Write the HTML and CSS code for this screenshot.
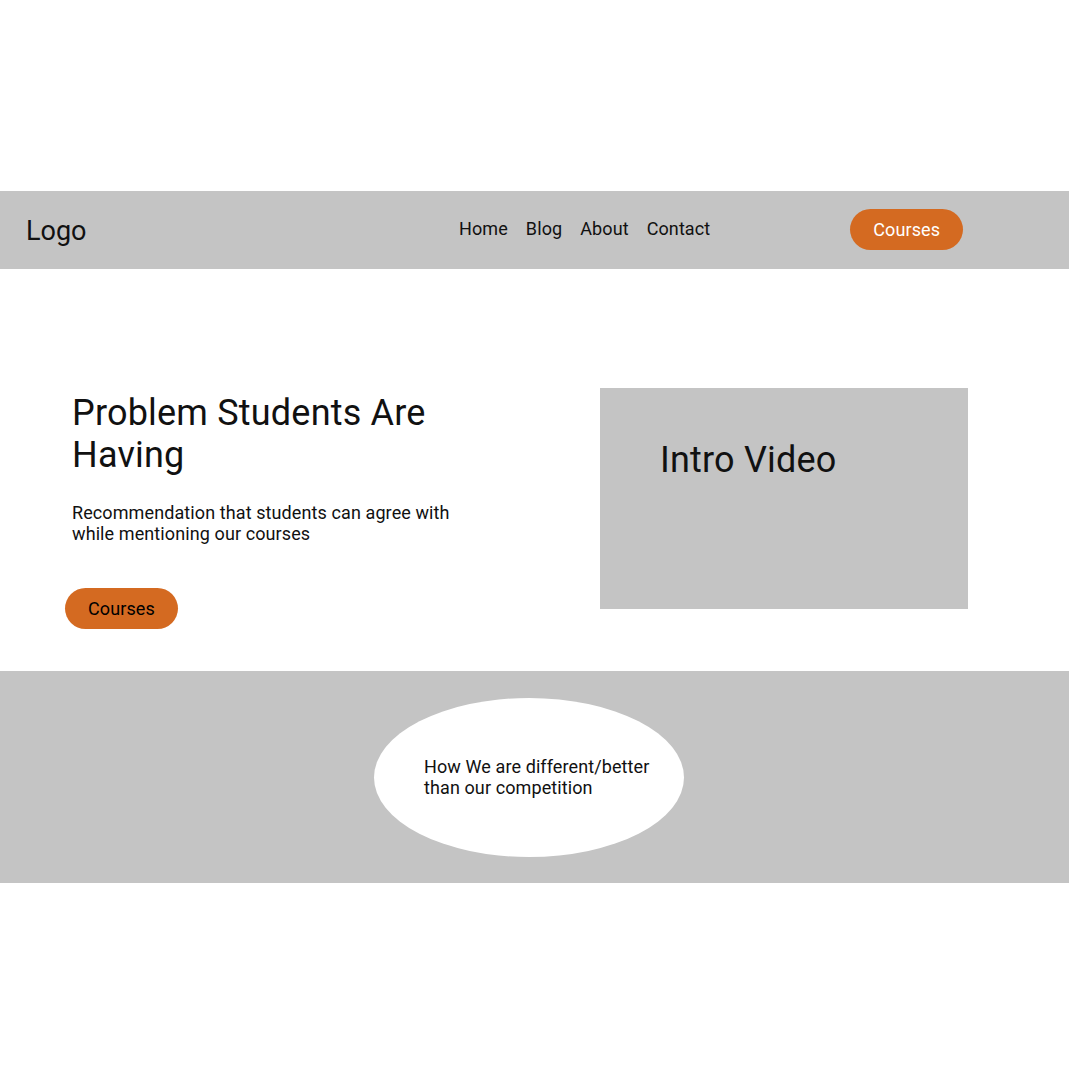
FILE: index.html
```html
<!DOCTYPE html>
<html>
	<head>
		<meta charset="utf-8">
		<title>Courses</title>
		<link rel="stylesheet" href="styles.css">
	</head>
	<body>
		<div class="page">
			<div class="header">
				<div class="logo">Logo</div>
				<ul class="nav">
					<li>Home</li>
					<li>Blog</li>
					<li>About</li>
					<li>Contact</li>
				</ul>
				<div class="btn btnTop">Courses</div>
			</div>

			<div class="hero">
				<div class="heroText">
					<h1>Problem Students Are Having</h1>
					<p>Recommendation that students can agree with while mentioning our courses</p>
					<div class="btn btnHero">Courses</div>
				</div>
				<div class="video">Intro Video</div>
			</div>

			<div class="band">
				<div class="oval">
					<p>How We are different/better than our competition</p>
				</div>
			</div>
		</div>
	</body>
</html>
```

FILE: styles.css
```css
*{
	margin: 0;
	padding: 0;
}
body{
	background-color: #fff;
	font-family: Roboto, "Liberation Sans", sans-serif;
	color: #111;
}
.page{
	width: 1069px;
	padding-top: 191px;
}
.header{
	display: flex;
	align-items: center;
	height: 78px;
	padding-left: 26px;
	background-color: #c4c4c4;
}
.logo{
	width: 433px;
	font-size: 27px;
	line-height: 30px;
	margin-top: 2px;
}
.nav{
	display: flex;
	gap: 18px;
	list-style: none;
	font-size: 18px;
	letter-spacing: 0.1px;
	margin-top: -4px;
}
.btn{
	height: 41px;
	line-height: 41px;
	padding: 0 23px;
	border-radius: 21px;
	background-color: #d46a21;
	font-size: 18px;
	letter-spacing: 0.1px;
}
.btnTop{
	margin-left: 140px;
	margin-top: -1px;
	color: #fff;
}
.hero{
	display: flex;
	align-items: flex-start;
	height: 402px;
	padding-top: 119px;
	box-sizing: border-box;
}
.heroText{
	width: 400px;
	margin-left: 72px;
	margin-top: 4px;
}
.heroText h1{
	font-size: 36px;
	font-weight: 400;
	line-height: 42px;
	letter-spacing: 0.2px;
}
.heroText p{
	margin-top: 26px;
	font-size: 18px;
	line-height: 21px;
	letter-spacing: 0.1px;
}
.btnHero{
	display: inline-block;
	margin-top: 44px;
	margin-left: -7px;
	color: #000;
}
.video{
	width: 368px;
	height: 221px;
	margin-left: 128px;
	padding: 51px 0 0 60px;
	box-sizing: border-box;
	background-color: #c4c4c4;
	font-size: 36px;
	line-height: 42px;
	letter-spacing: 0.2px;
}
.band{
	display: flex;
	justify-content: center;
	align-items: center;
	height: 212px;
	padding-right: 11px;
	background-color: #c4c4c4;
}
.oval{
	display: flex;
	align-items: center;
	width: 310px;
	height: 159px;
	padding-left: 50px;
	box-sizing: border-box;
	border-radius: 50%;
	background-color: #fff;
}
.oval p{
	width: 235px;
	font-size: 18px;
	line-height: 21px;
	letter-spacing: 0.1px;
}
```
